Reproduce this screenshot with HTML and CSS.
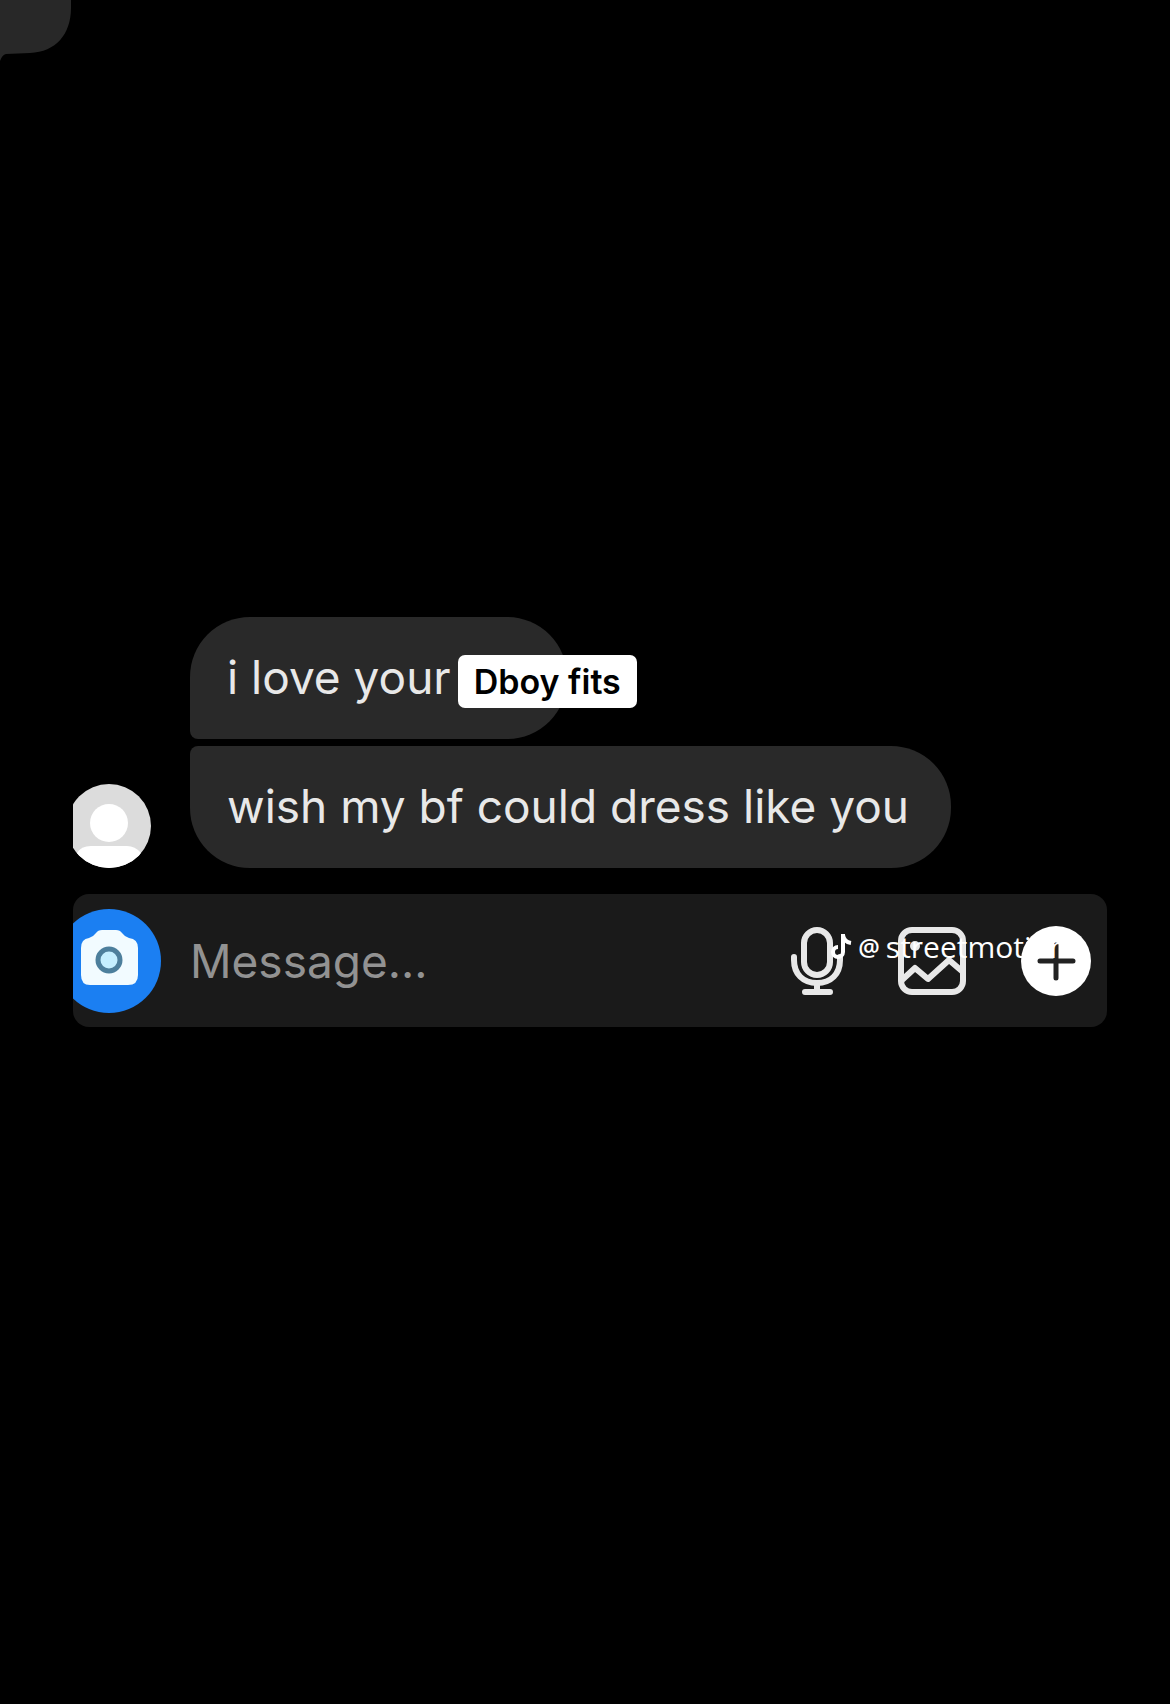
FILE: index.html
```html
<!DOCTYPE html>
<html lang="en">
<head>
  <meta charset="UTF-8">
  <meta name="viewport" content="width=device-width, initial-scale=1.0">
  <title>Messages</title>
  <link rel="stylesheet" href="styles.css">
</head>
<body>

  <svg class="corner" width="72" height="62" viewBox="0 0 72 62" aria-hidden="true">
    <path d="M0 0H71V8C71 34 56 52 30 53L6 54Q2 55 0 61Z"/>
  </svg>

  <main class="chat">
    <section class="thread">
      <svg class="avatar" width="80" height="86" viewBox="0 0 80 86" aria-hidden="true">
        <defs>
          <clipPath id="face"><circle cx="36" cy="44" r="42"/></clipPath>
        </defs>
        <g clip-path="url(#face)">
          <rect width="80" height="86" fill="#dcdcdc"/>
          <circle cx="36" cy="41" r="19" fill="#fff"/>
          <path d="M4 86V71Q8 64 18 64H54Q62 64 68 71V86Z" fill="#fff"/>
        </g>
      </svg>
      <div class="messages">
        <p class="bubble first"><span>i love your</span> <span class="tag">Dboy fits</span></p>
        <p class="bubble last">wish my bf could dress like you</p>
      </div>
    </section>

    <form class="composer">
      <button class="camera" type="button" aria-label="Camera">
        <svg width="89" height="106" viewBox="0 0 89 106">
          <circle cx="36" cy="53" r="52" fill="#1b7ff2"/>
          <path d="M16 30Q20 29 23 25Q25 22 29 22H43Q47 22 49 25Q52 29 56 30Q65 31 65 40V67Q65 77 55 77H17Q8 77 8 67V40Q8 31 16 30Z" fill="#f2fbff"/>
          <circle cx="36" cy="52" r="11" fill="#c5efff" stroke="#4d7f9c" stroke-width="5"/>
        </svg>
      </button>
      <input class="message" type="text" placeholder="Message..." aria-label="Message">
      <div class="actions">
        <button type="button" aria-label="Voice message">
          <svg width="54" height="70" viewBox="0 0 54 70" fill="none" stroke="#e8e8e8" stroke-width="6">
            <rect x="14" y="4" width="26" height="45" rx="13"/>
            <path d="M4 31V34C4 48 13 57 27 57S50 48 50 34V31M27 57V65M15 66H40" stroke-linecap="round"/>
          </svg>
        </button>
        <button type="button" aria-label="Photo">
          <svg width="70" height="70" viewBox="0 0 70 70" fill="none" stroke="#e8e8e8" stroke-width="6">
            <rect x="4" y="4" width="62" height="62" rx="11"/>
            <path d="M5 54L18 42L31 53L52 34L66 46" stroke-linejoin="round"/>
            <circle cx="18" cy="20" r="5" fill="#e8e8e8" stroke="none"/>
          </svg>
        </button>
        <button type="button" aria-label="More">
          <svg width="72" height="72" viewBox="0 0 72 72">
            <circle cx="36" cy="36" r="35" fill="#fff"/>
            <path d="M36 20V53M20 36H53" stroke="#222" stroke-width="5" stroke-linecap="round"/>
          </svg>
        </button>
      </div>
      <div class="watermark">
        <svg width="21" height="26" viewBox="0 0 21 26" fill="none" stroke="#fff" stroke-width="4" aria-hidden="true">
          <path d="M12 0V18A5 5 0 1 1 7 13M12 1Q13 8 20 9"/>
        </svg>
        <span class="at">@</span><span>streetmotion</span>
      </div>
    </form>
  </main>

</body>
</html>
```

FILE: styles.css
```css
* {
  box-sizing: border-box;
}

body {
  margin: 0;
  min-height: 100vh;
  display: flex;
  flex-direction: column;
  justify-content: center;
  position: relative;
  background: #000;
  color: #e8e8e8;
  font-family: Inter, "Liberation Sans", sans-serif;
}

.corner {
  position: absolute;
  top: 0;
  left: 0;
  fill: #282828;
}

.chat {
  padding: 0 63px 60px 73px;
}

.thread {
  display: flex;
  align-items: flex-end;
  gap: 37px;
}

.messages {
  display: flex;
  flex-direction: column;
  align-items: flex-start;
  gap: 7px;
}

.bubble {
  margin: 0;
  height: 122px;
  padding: 0 37px;
  line-height: 120px;
  font-size: 46px;
  white-space: nowrap;
  background: #292929;
}

.first {
  display: flex;
  align-items: baseline;
  gap: 7px;
  width: 377px;
  border-radius: 60px 60px 60px 8px;
}

.last {
  padding-right: 42px;
  border-radius: 8px 60px 60px 60px;
}

.tag {
  padding: 0 16px;
  line-height: 53px;
  font-size: 34px;
  font-weight: 600;
  color: #000;
  background: #fff;
  border-radius: 7px;
}

.composer {
  position: relative;
  display: flex;
  align-items: center;
  height: 133px;
  margin-top: 26px;
  padding-right: 15px;
  background: #1a1a1a;
  border-radius: 16px;
}

button {
  display: flex;
  padding: 0;
  border: 0;
  background: none;
  cursor: pointer;
}

.message {
  flex: 1;
  min-width: 0;
  height: 80px;
  margin-left: 28px;
  padding: 0;
  border: 0;
  outline: 0;
  background: none;
  color: #e8e8e8;
  font-family: inherit;
  font-size: 46px;
}

.message::placeholder {
  color: #929292;
  opacity: 1;
}

.actions {
  display: flex;
  align-items: center;
  gap: 53px;
}

.watermark {
  position: absolute;
  top: 37px;
  right: 39px;
  display: flex;
  align-items: center;
  gap: 6px;
  line-height: 32px;
  font-family: "Open Sans", "Noto Sans", sans-serif;
  font-size: 30px;
  color: #fff;
  pointer-events: none;
}

.at {
  font-size: 24px;
  font-weight: 600;
}
```
